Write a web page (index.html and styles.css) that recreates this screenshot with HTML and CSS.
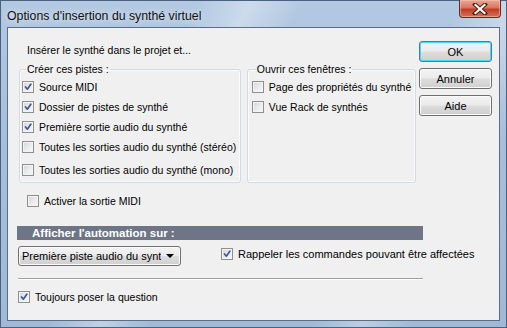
FILE: index.html
```html
<!DOCTYPE html>
<html lang="fr">
<head>
    <meta charset="UTF-8">
    <title>Options d'insertion du synthé virtuel</title>
    <link rel="stylesheet" href="styles.css">
</head>
<body>
    <div class="window">
        <div class="titlebar">
            <span class="title">Options d'insertion du synthé virtuel</span>
            <span class="close">
                <svg width="16" height="12" viewBox="0 0 16 12">
                    <path d="M3 1.5 L13 10.5 M13 1.5 L3 10.5" stroke="#4a1a12" stroke-width="4" stroke-linecap="square"/>
                    <path d="M3.5 2 L12.5 10 M12.5 2 L3.5 10" stroke="#fff" stroke-width="2.2" stroke-linecap="square"/>
                </svg>
            </span>
        </div>

        <div class="client">
            <div class="top">
                <div class="left">
                    <div class="intro">Insérer le synthé dans le projet et...</div>
                    <div class="groups">
                        <fieldset class="group tracks">
                            <legend>Créer ces pistes :</legend>
                            <label class="row"><span class="cb on"><svg viewBox="0 0 12 12"><path d="M3 6 L5.2 8.6 L9.4 2.6"/></svg></span>Source MIDI</label>
                            <label class="row"><span class="cb on"><svg viewBox="0 0 12 12"><path d="M3 6 L5.2 8.6 L9.4 2.6"/></svg></span>Dossier de pistes de synthé</label>
                            <label class="row"><span class="cb on"><svg viewBox="0 0 12 12"><path d="M3 6 L5.2 8.6 L9.4 2.6"/></svg></span>Première sortie audio du synthé</label>
                            <label class="row"><span class="cb"></span>Toutes les sorties audio du synthé (stéréo)</label>
                            <label class="row last"><span class="cb"></span>Toutes les sorties audio du synthé (mono)</label>
                        </fieldset>
                        <fieldset class="group windows">
                            <legend>Ouvrir ces fenêtres :</legend>
                            <label class="row"><span class="cb"></span>Page des propriétés du synthé</label>
                            <label class="row"><span class="cb"></span>Vue Rack de synthés</label>
                        </fieldset>
                    </div>
                </div>
                <div class="buttons">
                    <button class="btn default">OK</button>
                    <button class="btn">Annuler</button>
                    <button class="btn">Aide</button>
                </div>
            </div>

            <label class="row midi-out"><span class="cb"></span>Activer la sortie MIDI</label>

            <div class="section-bar">Afficher l'automation sur :</div>

            <div class="auto-row">
                <div class="dropdown">
                    <span class="dd-text">Première piste audio du synthé</span>
                    <span class="dd-arrow"></span>
                </div>
                <label class="row recall"><span class="cb on"><svg viewBox="0 0 12 12"><path d="M3 6 L5.2 8.6 L9.4 2.6"/></svg></span>Rappeler les commandes pouvant être affectées</label>
            </div>

            <div class="separator"></div>

            <label class="row always"><span class="cb on"><svg viewBox="0 0 12 12"><path d="M3 6 L5.2 8.6 L9.4 2.6"/></svg></span>Toujours poser la question</label>
        </div>
    </div>
</body>
</html>
```

FILE: styles.css
```css
body {
    margin: 0;
    width: 507px;
    height: 328px;
    overflow: hidden;
    font-family: 'Liberation Sans', Arial, sans-serif;
    font-size: 10.5px;
    color: #000;
}

.window {
    width: 507px;
    height: 328px;
    box-sizing: border-box;
    border: 1px solid #4a6280;
    background:
        linear-gradient(115deg, rgba(255,255,255,0) 30%, rgba(255,255,255,0.35) 38%, rgba(255,255,255,0) 46%, rgba(255,255,255,0) 70%, rgba(255,255,255,0.3) 78%, rgba(255,255,255,0) 86%),
        linear-gradient(180deg, #b3c9e2 0%, #a6bfdc 40%, #9fb9d7 100%);
    display: flex;
    flex-direction: column;
}

.titlebar {
    height: 26px;
    display: flex;
    align-items: flex-start;
    padding-left: 6px;
}

.title {
    font-size: 12.3px;
    margin-top: 8px;
    color: #111;
    text-shadow: 0 0 6px rgba(255, 255, 255, 0.9);
}

.close {
    margin-left: auto;
    margin-right: 5px;
    margin-top: -1px;
    width: 42px;
    height: 18px;
    box-sizing: border-box;
    border: 1px solid #6b2a20;
    border-top: none;
    border-radius: 0 0 4px 4px;
    background: linear-gradient(180deg, #e8a896 0%, #d87560 45%, #c13d25 55%, #d4735a 100%);
    box-shadow: inset 0 0 0 1px rgba(255, 200, 180, 0.5);
    display: flex;
    align-items: center;
    justify-content: center;
}

.client {
    flex: 1;
    margin: 0 6px 6px 6px;
    border: 1px solid #5b6e86;
    background-color: #f0f0f0;
    padding-left: 1px;
}

.top {
    display: flex;
    padding-top: 13px;
}

.left {
    width: 397px;
    padding-left: 10px;
}

.intro {
    margin-top: 3px;
    padding-left: 8px;
    line-height: 13px;
}

.groups {
    display: flex;
    gap: 6px;
    margin-top: 6px;
}

.group {
    margin: 0;
    min-width: 0;
    border: 1px solid #d3dbe2;
    border-radius: 3px;
    padding: 1px 0 2px 2px;
    box-shadow: inset 0 0 0 1px #fbfbfb;
}

.group legend {
    padding: 0 1px;
    margin-left: 4px;
    line-height: 13px;
}

.tracks {
    width: 223px;
    box-sizing: border-box;
}

.windows {
    width: 170px;
    box-sizing: border-box;
    padding-left: 4px;
}

.row {
    display: flex;
    align-items: center;
    height: 20px;
    white-space: nowrap;
}

.row.last {
    margin-top: 3px;
}

.cb {
    width: 12px;
    height: 12px;
    box-sizing: border-box;
    border: 1px solid #8f8f8f;
    background: linear-gradient(135deg, #d2d4d8 0%, #eeeeee 60%, #f8f8f8 100%);
    box-shadow: inset 0 0 0 1px #f4f4f4;
    margin-right: 5px;
    flex: none;
    display: flex;
}

.cb svg {
    width: 10px;
    height: 10px;
    fill: none;
    stroke: #3b55a6;
    stroke-width: 2;
    stroke-linecap: round;
    stroke-linejoin: round;
}

.buttons {
    display: flex;
    flex-direction: column;
    gap: 6px;
    margin-left: 3px;
}

.btn {
    width: 73px;
    height: 21px;
    font-family: inherit;
    font-size: 11px;
    color: #000;
    border: 1px solid #707070;
    border-radius: 3px;
    background: linear-gradient(180deg, #f3f3f3 0%, #ebebeb 48%, #dddddd 52%, #cfcfcf 100%);
    box-shadow: inset 0 0 0 1px #fbfbfb;
    padding: 0;
}

.btn.default {
    border-color: #3c7fb1;
    box-shadow: inset 0 0 0 1px #48d8fb;
}

.midi-out {
    margin-top: 8px;
    padding-left: 18px;
}

.section-bar {
    margin: 15px 0 0 8px;
    width: 406px;
    height: 14px;
    line-height: 14px;
    background-color: #6e7586;
    color: #fff;
    font-weight: bold;
    font-size: 11.5px;
    padding-left: 15px;
    box-sizing: border-box;
}

.auto-row {
    display: flex;
    align-items: flex-start;
    margin-top: 6px;
    padding-left: 9px;
}

.dropdown {
    width: 163px;
    height: 20px;
    box-sizing: border-box;
    border: 1px solid #707070;
    border-radius: 3px;
    background: linear-gradient(180deg, #f3f3f3 0%, #ebebeb 48%, #dddddd 52%, #cfcfcf 100%);
    box-shadow: inset 0 0 0 1px #fbfbfb;
    display: flex;
    align-items: center;
    padding: 0 6px 0 3px;
    font-size: 11px;
}

.dd-text {
    flex: 1;
    overflow: hidden;
    white-space: nowrap;
}

.dd-arrow {
    width: 0;
    height: 0;
    border-left: 4px solid transparent;
    border-right: 4px solid transparent;
    border-top: 4px solid #000;
    margin-left: 5px;
}

.recall {
    height: 16px;
    margin-left: 40px;
    font-size: 11px;
}

.separator {
    margin: 12px 0 0 9px;
    width: 405px;
    border-top: 1px solid #a0a0a0;
    border-bottom: 1px solid #ffffff;
}

.always {
    height: 16px;
    margin-top: 9px;
    padding-left: 9px;
}
```
